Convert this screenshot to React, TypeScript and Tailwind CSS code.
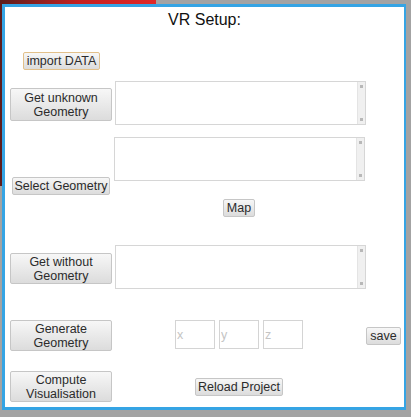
import React from 'react'

const btn =
  "bg-gradient-to-b from-[#f7f7f7] to-[#dcdcdc] border border-[#c6c6c6] rounded-[2px] text-[#2b2b2b] text-[12.5px] leading-[14px] flex items-center justify-center text-center shrink-0"

function Area() {
  return (
    <div className="w-[251px] h-[44px] border border-[#d6d6d6] bg-white flex shrink-0">
      <textarea className="flex-1 resize-none outline-none bg-white" />
      <div className="w-[8px] bg-[#f0f0f0] border-l border-[#e4e4e4] flex flex-col justify-between items-center py-[3px]">
        <div className="w-[3px] h-[3px] bg-[#b8b8b8]" />
        <div className="w-[3px] h-[3px] bg-[#b8b8b8]" />
      </div>
    </div>
  )
}

function Coord({ ph }: { ph: string }) {
  return (
    <input
      placeholder={ph}
      className="w-[40px] h-[29px] border border-[#d4d4d4] px-[1px] text-[12.5px] placeholder:text-[#c4c4c4] outline-none"
    />
  )
}

export default function App() {
  return (
    <div className="relative w-[411px] h-[417px] bg-[#a3a3a3] overflow-hidden" style={{ fontFamily: '"Liberation Sans", Arial, sans-serif' }}>
      {/* red window behind */}
      <div className="absolute left-0 top-0 w-[156px] h-[186px] bg-gradient-to-r from-[#5c1c1c] via-[#c42020] to-[#e02828]" />

      <div className="relative ml-[2px] mt-[4px] w-[404px] h-[406px] border-t-[3px] border-l-[3px] border-b-[3px] border-r-[2px] border-[#35a4e4] bg-white flex flex-col">
        <div className="pt-[3px] text-center text-[16px] leading-[20px] text-[#111]">VR Setup:</div>

        <div className="pl-[18px] mt-[22px]">
          <button className={`${btn} w-[77px] h-[18px] border-[#e2c08a]`}>import DATA</button>
        </div>

        {/* row 1 */}
        <div className="flex items-start mt-[11px] pl-[5px] gap-[3px]">
          <button className={`${btn} w-[102px] h-[33px] mt-[7px]`}>Get unknown<br />Geometry</button>
          <Area />
        </div>

        {/* row 2 */}
        <div className="flex items-start mt-[12px] pl-[7px]">
          <button className={`${btn} w-[98px] h-[18px] mt-[40px]`}>Select Geometry</button>
          <div className="ml-[4px]">
            <Area />
          </div>
        </div>

        <div className="pl-[218px] mt-[4px]">
          <button className={`${btn} w-[32px] h-[18px]`}>Map</button>
        </div>

        {/* row 3 */}
        <div className="flex items-start mt-[28px] pl-[5px] gap-[3px]">
          <button className={`${btn} w-[102px] h-[31px] mt-[8px]`}>Get without<br />Geometry</button>
          <Area />
        </div>

        {/* row 4 */}
        <div className="flex items-start mt-[31px] pl-[5px]">
          <button className={`${btn} w-[102px] h-[31px]`}>Generate<br />Geometry</button>
          <div className="flex gap-[4px] ml-[63px]">
            <Coord ph="x" />
            <Coord ph="y" />
            <Coord ph="z" />
          </div>
          <button className={`${btn} w-[35px] h-[18px] ml-[63px] mt-[7px]`}>save</button>
        </div>

        {/* row 5 */}
        <div className="flex items-start mt-[20px] pl-[5px]">
          <button className={`${btn} w-[102px] h-[31px]`}>Compute<br />Visualisation</button>
          <button className={`${btn} w-[88px] h-[18px] ml-[83px] mt-[7px]`}>Reload Project</button>
        </div>
      </div>
    </div>
  )
}
